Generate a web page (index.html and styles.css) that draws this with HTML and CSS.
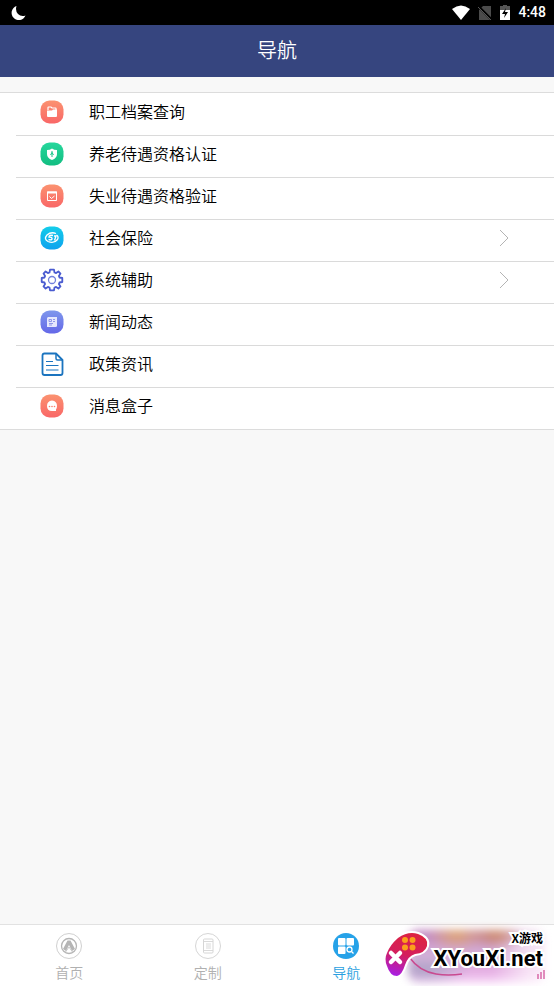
FILE: index.html
```html
<!DOCTYPE html>
<html lang="zh-CN">
<head>
<meta charset="utf-8">
<meta name="viewport" content="width=device-width, initial-scale=1">
<title>导航</title>
<link rel="stylesheet" href="styles.css">
</head>
<body>
<svg class="defs" width="0" height="0" aria-hidden="true">
  <defs>
    <linearGradient id="coral" x1="0" y1="0" x2="0" y2="1"><stop offset="0" stop-color="#fb9270"/><stop offset="1" stop-color="#f96767"/></linearGradient>
    <linearGradient id="green" x1="0" y1="0" x2="0" y2="1"><stop offset="0" stop-color="#26d79c"/><stop offset="1" stop-color="#12bd81"/></linearGradient>
    <linearGradient id="cyan" x1="0" y1="0" x2="0" y2="1"><stop offset="0" stop-color="#14cdea"/><stop offset="1" stop-color="#0da2ee"/></linearGradient>
    <linearGradient id="violet" x1="0" y1="0" x2="0" y2="1"><stop offset="0" stop-color="#7f97ec"/><stop offset="1" stop-color="#6468e8"/></linearGradient>
    <linearGradient id="pad" x1="0.6" y1="0" x2="0.3" y2="1"><stop offset="0" stop-color="#dc2342"/><stop offset="0.5" stop-color="#d41f5c"/><stop offset="1" stop-color="#a91fe0"/></linearGradient>
  </defs>
</svg>

<div class="status">
  <svg width="16" height="16" viewBox="0 0 16 16" aria-hidden="true"><path d="M5.500 1A7.200 7.200 0 1 0 14.500 10.500Q10 12 7 9Q4 5.500 5.500 1Z" fill="#fff"/></svg>
  <div class="status-right">
    <svg width="18" height="15" viewBox="0 0 18 15" aria-hidden="true"><path d="M0 4Q9-3 18 4L9 15Z" fill="#fff"/></svg>
    <svg width="14" height="14" viewBox="0 0 14 14" aria-hidden="true"><path d="M5 0H13V14H1V4Z" fill="#4b4b4b"/><path d="M0 0L14 14" stroke="#000" stroke-width="2.500"/><path d="M0 1L13 14" stroke="#555" stroke-width="1"/></svg>
    <svg width="10" height="15" viewBox="0 0 10 15" aria-hidden="true"><path d="M3 0H7V1H10V6H0V1H3Z" fill="#555"/><path d="M0 5H10V15H0Z" fill="#fff"/><path d="M6 3L2 9H5L4 13L8 7H5Z" fill="#000"/></svg>
    <span>4:48</span>
  </div>
</div>

<header class="header"><h1>导航</h1></header>

<main class="main">
  <ul class="menu">
    <li><a class="row" href="#archive">
      <svg class="icon" viewBox="0 0 24 24" aria-hidden="true"><rect x="0.500" y="0.500" width="23" height="23" rx="9" fill="url(#coral)"/><path d="M8 10V7.500Q8 7 8.500 7H11L12 8H15.500Q16 8 16 8.500V10" fill="none" stroke="#fff" stroke-width="1.200"/><path d="M7 10.500H12L13 9.500H17V16Q17 17 16 17H8Q7 17 7 16Z" fill="#fff"/></svg>
      <span>职工档案查询</span></a></li>
    <li><a class="row" href="#pension">
      <svg class="icon" viewBox="0 0 24 24" aria-hidden="true"><rect x="0.500" y="0.500" width="23" height="23" rx="9" fill="url(#green)"/><path d="M12 6.500Q14 8 17 8V12Q17 16 12 18Q7 16 7 12V8Q10 8 12 6.500Z" fill="#fff"/><path d="M12 9V15M10.500 13L12 10.500L13.500 13" fill="none" stroke="#1ac58a"/></svg>
      <span>养老待遇资格认证</span></a></li>
    <li><a class="row" href="#unemployment">
      <svg class="icon" viewBox="0 0 24 24" aria-hidden="true"><rect x="0.500" y="0.500" width="23" height="23" rx="9" fill="url(#coral)"/><path d="M7.500 8H16.500V16.500H7.500ZM9.500 12.500L11.500 14.500L14.500 12" fill="none" stroke="#fff"/><path d="M7 7.500H17V9.500H7Z" fill="#fff"/></svg>
      <span>失业待遇资格验证</span></a></li>
    <li><a class="row" href="#insurance">
      <svg class="icon" viewBox="0 0 24 24" aria-hidden="true"><rect x="0.500" y="0.500" width="23" height="23" rx="9" fill="url(#cyan)"/><path d="M16 7.500Q11 5.500 7 9Q3.500 13 8 15.500Q14 18 17.500 13.500Q19 10.500 16.500 9" fill="none" stroke="#fff" stroke-width="1.300"/><path d="M13 9.500Q9 8.500 9 11Q12.500 11 12 13Q11 14.500 8.500 13.500M14 10H16L14.500 14.500" fill="none" stroke="#fff" stroke-width="1.400"/></svg>
      <span>社会保险</span>
      <svg class="chevron" viewBox="0 0 10 18" aria-hidden="true"><path d="M1 1L9 9L1 17"/></svg></a></li>
    <li><a class="row" href="#system">
      <svg class="icon" viewBox="0 0 24 24" aria-hidden="true"><g fill="none" stroke="#4a5bd0" stroke-width="1.800" stroke-linejoin="round"><path d="M19.500 9.500L22.300 10V14L19.500 14.500L18.900 16.100L20.500 18.400L18.400 20.500L16.100 18.900L14.500 19.500L14 22.300H10L9.500 19.500L7.900 18.900L5.600 20.500L3.500 18.400L5.100 16.100L4.500 14.500L1.700 14V10L4.500 9.500L5.100 7.900L3.500 5.600L5.600 3.500L7.900 5.100L9.500 4.500L10 1.700H14L14.500 4.500L16.100 5.100L18.400 3.500L20.500 5.600L18.900 7.900Z"/><circle cx="12" cy="12" r="3.500" stroke="#7280dc" stroke-width="1.300"/></g></svg>
      <span>系统辅助</span>
      <svg class="chevron" viewBox="0 0 10 18" aria-hidden="true"><path d="M1 1L9 9L1 17"/></svg></a></li>
    <li><a class="row" href="#news">
      <svg class="icon" viewBox="0 0 24 24" aria-hidden="true"><rect x="0.500" y="0.500" width="23" height="23" rx="9" fill="url(#violet)"/><path d="M8 7H17V15.500Q17 17 15.500 17H7V8Z" fill="#e6e8fd"/><path d="M9 9.500H11.500V11.500H9ZM13 9.500H15M13 11.500H15M9 13.500H13M9 15H12" fill="none" stroke="#7b84e4" stroke-width="0.800"/></svg>
      <span>新闻动态</span></a></li>
    <li><a class="row" href="#policy">
      <svg class="icon" viewBox="0 0 24 24" aria-hidden="true"><g fill="none" stroke="#1b74bf" stroke-linejoin="round"><path d="M4.500 1.500H16L22.500 8V21Q22.500 23 20.500 23H4.500Q2.500 23 2.500 21V3.500Q2.500 1.500 4.500 1.500Z" stroke-width="1.800"/><path d="M16 2V6.500Q16 8 17.500 8H22" stroke-width="1.500"/><path d="M6 9.500H13M6 13.500H18.500M6 18H18.500" stroke-width="1.200"/></g></svg>
      <span>政策资讯</span></a></li>
    <li><a class="row" href="#messages">
      <svg class="icon" viewBox="0 0 24 24" aria-hidden="true"><rect x="0.500" y="0.500" width="23" height="23" rx="9" fill="url(#coral)"/><path d="M12 6.500Q17 7 17 12Q17 14.500 16 15.500V17H12Q7 17 7 12Q7 7 12 6.500Z" fill="#fff"/><g fill="#fa806c"><circle cx="9.500" cy="12.500" r="0.800"/><circle cx="12" cy="12.500" r="0.800"/><circle cx="14.500" cy="12.500" r="0.800"/></g></svg>
      <span>消息盒子</span></a></li>
  </ul>
</main>

<nav class="tabs">
  <a class="tab" href="#home">
    <svg viewBox="0 0 28 28" aria-hidden="true"><g fill="none" stroke="#d0d0d0"><circle cx="14" cy="14" r="12.500"/><circle cx="14" cy="14" r="7.500" stroke="#b5b5b5" stroke-width="1.300"/></g><path d="M12.500 8.500H15.500L20 17L17 19L14 13L11 19L8 17Z" fill="#b5b5b5"/><path d="M10.500 20L14 15L17.500 20" fill="none" stroke="#c8c8c8"/></svg>
    <span>首页</span></a>
  <a class="tab" href="#custom">
    <svg viewBox="0 0 28 28" aria-hidden="true"><g fill="none" stroke="#d6d6d6"><circle cx="14" cy="14" r="12.500"/><rect x="9.500" y="7" width="9.500" height="14" rx="1"/><path d="M9.500 9.500H19M9.500 18.500H19M12 12H17M12 14H17M12 16H17" stroke-width="0.900"/></g></svg>
    <span>定制</span></a>
  <a class="tab active" href="#nav" aria-current="page">
    <svg viewBox="0 0 28 28" aria-hidden="true"><circle cx="14" cy="14" r="13" fill="#26a2e8"/><g fill="#fff"><rect x="6" y="6" width="7.500" height="7.500" rx="1"/><rect x="14.500" y="6" width="7.500" height="7.500" rx="1"/><rect x="6" y="14.500" width="7.500" height="7.500" rx="1"/></g><g fill="none" stroke="#fff" stroke-width="1.300"><circle cx="17.500" cy="17.500" r="2.500"/><path d="M19.500 19.500L21.500 21.500"/></g></svg>
    <span>导航</span></a>
  <div class="brand">
    <div class="glow"></div>
    <svg class="pad" viewBox="0 0 54 52" aria-hidden="true"><path d="M26 26Q35 39 52 42Q64 44 78 42" fill="none" stroke="#c94a90" stroke-width="1.500"/><path d="M14 6Q24 -1 34 2Q45 6 43 14Q41 21 31 22Q24 24 21 33Q18 43 13 44Q6 44 3 34Q0 27 3 21Q6 13 14 6Z" fill="url(#pad)" stroke="#fff" stroke-width="4" stroke-linejoin="round" paint-order="stroke"/><path d="M7 21L16 30M16 21L7 30" stroke="#fff" stroke-width="4.500" stroke-linecap="round"/><g fill="#fba01c"><circle cx="21" cy="8" r="3"/><circle cx="28.500" cy="8" r="3"/><circle cx="21" cy="15.500" r="3"/><circle cx="28.500" cy="15.500" r="3"/></g><path d="M154 42V47M157 40V47M160 38V47" stroke="#d76aa8" stroke-width="1.500"/></svg>
    <div class="brand-text"><small>X游戏</small><strong>XYouXi.net</strong></div>
  </div>
</nav>
</body>
</html>
```
FILE: styles.css
```css
* {
  box-sizing: border-box;
}

body {
  margin: 0;
  min-height: 100vh;
  display: flex;
  flex-direction: column;
  background: #f8f8f8;
  color: #000;
  font-family: "Noto Sans CJK SC", sans-serif;
  font-size: 16px;
  font-weight: 350;
}

a {
  color: inherit;
  text-decoration: none;
}

.defs {
  position: absolute;
}

.status {
  height: 25px;
  padding: 0 8px 0 11px;
  display: flex;
  align-items: center;
  justify-content: space-between;
  background: #000;
  color: #fff;
}

.status-right {
  display: flex;
  align-items: center;
  gap: 8px;
  font: 500 14px/25px Roboto, sans-serif;
}

.header {
  height: 52px;
  background: #36457f;
  color: #fff;
}

.header h1 {
  margin: 0;
  font-size: 20px;
  font-weight: 350;
  line-height: 50px;
  text-align: center;
}

.main {
  flex: 1;
  padding-top: 15px;
}

.menu {
  margin: 0;
  padding: 0;
  list-style: none;
  background: #fff;
  border-top: 1px solid #dcdcdc;
  border-bottom: 1px solid #dcdcdc;
}

.menu li {
  padding-left: 16px;
}

.row {
  height: 42px;
  padding: 0 45px 5px 24px;
  display: flex;
  align-items: center;
}

.row span {
  padding-bottom: 2px;
}

.menu li + li .row {
  border-top: 1px solid #dadada;
}

.icon {
  width: 24px;
  height: 24px;
  margin-right: 25px;
}

.chevron {
  width: 10px;
  height: 18px;
  margin-left: auto;
  fill: none;
  stroke: #b4b4b4;
  stroke-width: 1;
}

.tabs {
  position: relative;
  display: grid;
  grid-template-columns: repeat(4, 1fr);
  height: 62px;
  padding-top: 7px;
  background: #fff;
  border-top: 1px solid #e2e2e2;
}

.tab {
  display: flex;
  flex-direction: column;
  align-items: center;
  color: #b0b0b0;
  font-size: 14px;
  line-height: 24px;
}

.tab svg {
  width: 28px;
  height: 28px;
}

.active {
  color: #2a9fe0;
}

.brand {
  position: absolute;
  right: 8px;
  bottom: 4px;
  width: 162px;
  height: 54px;
}

.glow {
  position: absolute;
  inset: 2px 2px -1px 24px;
  background:
    radial-gradient(ellipse at 36% 8%, #e0a56c, transparent 24%),
    radial-gradient(ellipse at 64% 8%, #cf8a62, transparent 22%),
    radial-gradient(ellipse at 12% 75%, #a9a3c4, transparent 28%),
    linear-gradient(90deg, transparent 62%, #fdf3fbcc 90%),
    linear-gradient(#bd80bd, #d9b6dc 50%, #e3a9e0 75%, #f7d5f8);
  border-radius: 10px;
  filter: blur(4px);
}

.pad {
  position: absolute;
  left: 0;
  top: 4px;
  width: 54px;
  height: 52px;
  overflow: visible;
}

.brand-text {
  position: absolute;
  right: 3px;
  top: 2px;
  display: flex;
  flex-direction: column;
  align-items: flex-end;
  gap: 2px;
  color: #000;
  -webkit-text-stroke: 4px #fff;
  paint-order: stroke fill;
}

.brand-text small {
  font-size: 12px;
  font-weight: 700;
  line-height: 16px;
}

.brand-text strong {
  font: 700 22px/22px Roboto, sans-serif;
}
```
